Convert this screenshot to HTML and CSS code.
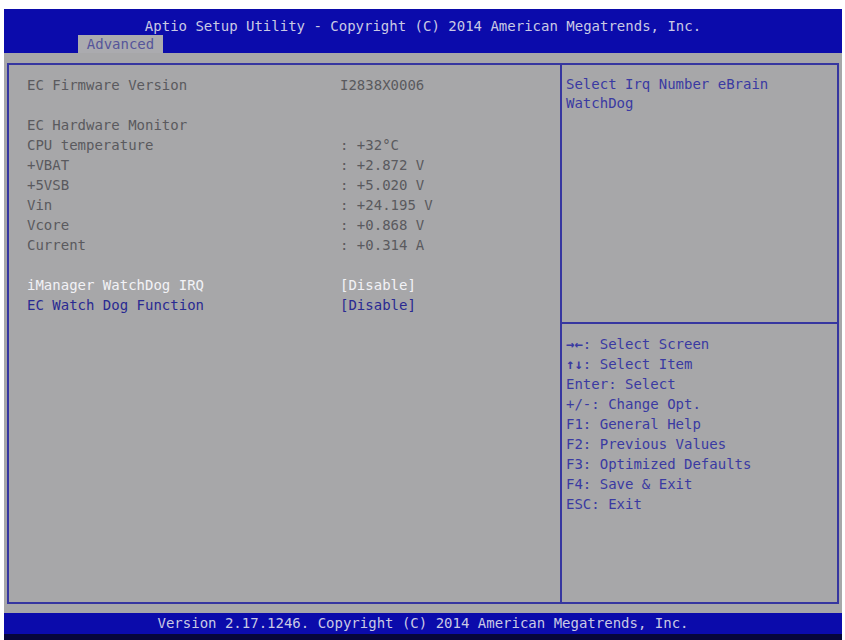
FILE: index.html
```html
<!DOCTYPE html>
<html lang="en">
<head>
  <meta charset="UTF-8">
  <title>Aptio Setup Utility</title>
  <link rel="stylesheet" href="styles.css">
</head>
<body>
  <div class="screen">
    <div class="header">
      <div class="title">Aptio Setup Utility - Copyright (C) 2014 American Megatrends, Inc.</div>
      <div class="tabs">
        <span class="tab">Advanced</span>
      </div>
    </div>
    <div class="main">
      <div class="box">
        <div class="left">
          <div class="row"><span class="label">EC Firmware Version</span><span class="value">I2838X0006</span></div>
          <div class="row"></div>
          <div class="row"><span class="label">EC Hardware Monitor</span></div>
          <div class="row"><span class="label">CPU temperature</span><span class="value">: +32°C</span></div>
          <div class="row"><span class="label">+VBAT</span><span class="value">: +2.872 V</span></div>
          <div class="row"><span class="label">+5VSB</span><span class="value">: +5.020 V</span></div>
          <div class="row"><span class="label">Vin</span><span class="value">: +24.195 V</span></div>
          <div class="row"><span class="label">Vcore</span><span class="value">: +0.868 V</span></div>
          <div class="row"><span class="label">Current</span><span class="value">: +0.314 A</span></div>
          <div class="row"></div>
          <div class="row selected"><span class="label">iManager WatchDog IRQ</span><span class="value">[Disable]</span></div>
          <div class="row option"><span class="label">EC Watch Dog Function</span><span class="value">[Disable]</span></div>
        </div>
        <div class="right">
          <div class="help">
            <div>Select Irq Number eBrain</div>
            <div>WatchDog</div>
          </div>
          <div class="keys">
            <div><span class="arrows">→←</span>: Select Screen</div>
            <div><span class="arrows">↑↓</span>: Select Item</div>
            <div>Enter: Select</div>
            <div>+/-: Change Opt.</div>
            <div>F1: General Help</div>
            <div>F2: Previous Values</div>
            <div>F3: Optimized Defaults</div>
            <div>F4: Save &amp; Exit</div>
            <div>ESC: Exit</div>
          </div>
        </div>
      </div>
    </div>
    <div class="footer">Version 2.17.1246. Copyright (C) 2014 American Megatrends, Inc.</div>
  </div>
</body>
</html>
```

FILE: styles.css
```css
* {
  box-sizing: border-box;
}
body {
  margin: 0;
  background: #fff;
  font-family: 'DejaVu Sans Mono', 'Liberation Mono', monospace;
  font-size: 14px;
}
.screen {
  margin: 9px 0 0 4px;
  width: 838px;
  height: 631px;
  display: flex;
  flex-direction: column;
  background: #a7a7a9;
}
.header {
  background: #0b0bab;
  height: 44px;
  display: flex;
  flex-direction: column;
}
.title {
  color: #c9c9e4;
  text-align: center;
  padding-top: 9px;
  line-height: 16px;
}
.tabs {
  margin-top: auto;
  padding-left: 74px;
  display: flex;
}
.tab {
  background: #ababaf;
  color: #55559a;
  width: 85px;
  height: 18px;
  line-height: 18px;
  text-align: center;
}
.main {
  flex: 1;
  padding: 10px 3px 9px 3px;
  display: flex;
}
.box {
  flex: 1;
  display: flex;
  border: 2px solid #3636a0;
}
.left {
  width: 553px;
  border-right: 2px solid #3636a0;
  padding: 10px 0 0 18px;
  color: #5a5a5e;
}
.row {
  display: flex;
  height: 20px;
  line-height: 20px;
}
.label {
  width: 313px;
}
.selected {
  color: #f2f2f6;
}
.option {
  color: #2a2a92;
}
.right {
  flex: 1;
  display: flex;
  flex-direction: column;
  color: #3a3aa2;
}
.help {
  height: 259px;
  border-bottom: 2px solid #3636a0;
  padding: 10px 0 0 4px;
  line-height: 19px;
}
.keys {
  padding: 10px 0 0 4px;
  line-height: 20px;
}
.arrows {
  font-weight: bold;
}
.footer {
  background: #0b0bab;
  color: #c9c9e4;
  text-align: center;
  line-height: 21px;
  border-bottom: 6px solid #06063a;
  height: 27px;
}
```
